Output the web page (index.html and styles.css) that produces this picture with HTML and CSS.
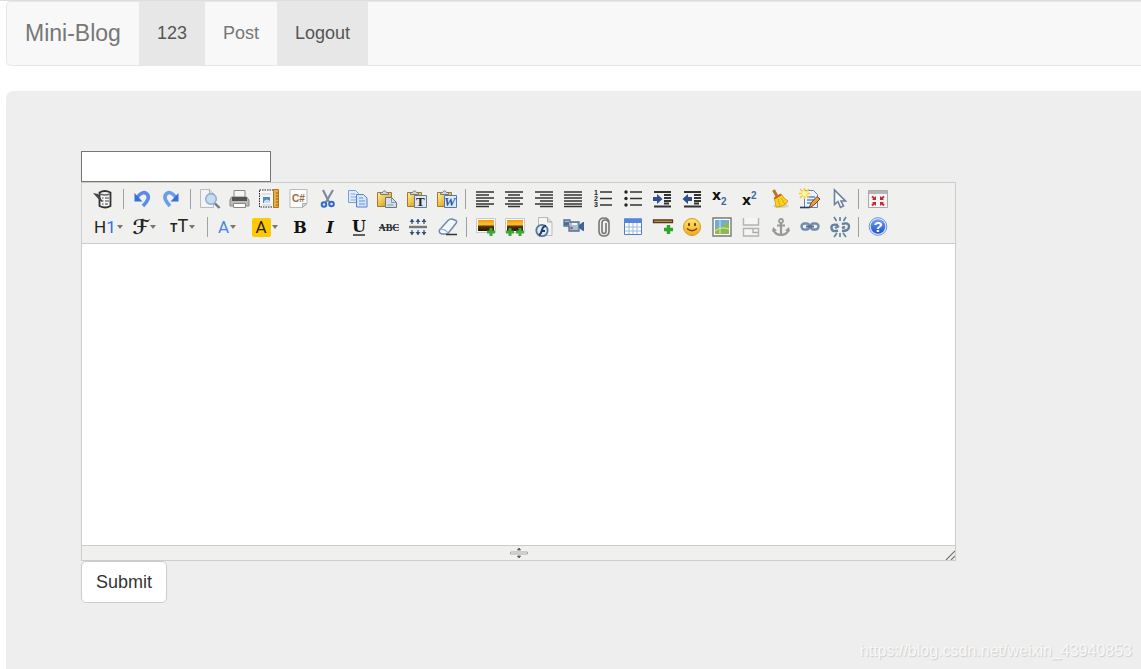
FILE: index.html
```
<!DOCTYPE html>
<html lang="en">
<head>
<meta charset="utf-8">
<title>Mini-Blog</title>
<link rel="stylesheet" href="styles.css">
</head>
<body>
<svg class="defs" aria-hidden="true">
  <defs>
    <linearGradient id="gold" x1="0" y1="0" x2="1" y2="1"><stop offset="0" stop-color="#fff0a0"/><stop offset=".5" stop-color="#edc149"/><stop offset="1" stop-color="#b98418"/></linearGradient>
    <linearGradient id="blue" x1="0" y1="0" x2="0" y2="1"><stop offset="0" stop-color="#6fa2f4"/><stop offset="1" stop-color="#1c50cc"/></linearGradient>
    <linearGradient id="sunset" x1="0" y1="0" x2="0" y2="1"><stop offset="0" stop-color="#f09a10"/><stop offset=".4" stop-color="#ffc42a"/><stop offset=".6" stop-color="#583008"/><stop offset="1" stop-color="#241507"/></linearGradient>
    <linearGradient id="smile" x1="0" y1="0" x2="0" y2="1"><stop offset="0" stop-color="#ffe573"/><stop offset="1" stop-color="#f5a918"/></linearGradient>
    <g id="board"><path d="M.500 3.500h14v14H.500z" fill="url(#gold)" stroke="#a17a2c"/><path d="M3.500 5.500v-2h2q2-3.500 4 0h2v2z" fill="#d6d6d6" stroke="#777"/></g>
    <path id="plus" d="M0-4V4M-4 0H4" fill="none" stroke="#38a838" stroke-width="3"/>
  </defs>
</svg>
<nav class="navbar">
  <a class="brand" href="#">Mini-Blog</a>
  <a class="nav-link active" href="#">123</a>
  <a class="nav-link" href="#">Post</a>
  <a class="nav-link active" href="#">Logout</a>
</nav>
<main class="jumbotron">
  <form class="post-form">
    <input class="title-input" type="text" aria-label="Title">
    <div class="editor">
      <div class="toolbar">
        <div class="tool-row">
          <button type="button" class="tool" aria-label="Source"><svg viewBox="0 0 20 20"><path d="M5.500 3.500q5-3 11 0v13.500q-5 3-11 0z" fill="#f4f4f4" stroke="#333" stroke-width="1.800"/><path d="M6 5q5 2 10 0" fill="none" stroke="#666" stroke-width="1.400"/><path d="M8 9h1.500m1.500 0h4M8 12h1.500m1.500 0h4M8 15h1.500m1.500 0h3" stroke="#444"/><path d="M-1 4l5 1 4.500 7-1 1-4-4z" fill="#444"/></svg></button>
          <span class="sep"></span>
          <button type="button" class="tool" aria-label="Undo"><svg viewBox="0 0 20 20"><path d="M5 8.500Q11 1 15 5T11 17" fill="none" stroke="#5b8ce4" stroke-width="3.600"/><path d="M2.500 4v8.500h8z" fill="#3770dc"/></svg></button>
          <button type="button" class="tool" aria-label="Redo"><svg viewBox="0 0 20 20"><path d="M14 8.500Q8 1 4.200 5T8 17" fill="none" stroke="#6d9de8" stroke-width="3.600"/><path d="M16.500 4v8.500h-8z" fill="#3770dc"/></svg></button>
          <span class="sep"></span>
          <button type="button" class="tool" aria-label="Preview"><svg viewBox="0 0 20 20"><path d="M.500.500h9l4 4v14h-13z" fill="#f2f3f5" stroke="#bbb"/><path d="M9.500.500v4h4" fill="#ddd" stroke="#aaa"/><circle cx="11" cy="10" r="5.300" fill="#c6dcf4" stroke="#8ba9d0" stroke-width="1.400"/><path d="M15 14.500l4.500 4.500" stroke="#777" stroke-width="2.400"/></svg></button>
          <button type="button" class="tool" aria-label="Print"><svg viewBox="0 0 20 20"><path d="M5 8V1.500h11V8" fill="#f6f6f6" stroke="#888"/><path d="M2.500 8h15l2.500 3v6H1v-6z" fill="#bbb" stroke="#888"/><path d="M3 8h15v4H3z" fill="#555"/><path d="M4.500 14.500h12v4h-12z" fill="#fff" stroke="#888"/></svg></button>
          <button type="button" class="tool" aria-label="Template"><svg viewBox="0 0 20 20"><path d="M.500 1h14v17H.500z" fill="#f5f6f8" stroke="#222" stroke-dasharray="1.500 1"/><path d="M4 8h7v6H4z" fill="#4d87c6"/><path d="M3 5h9M3 16h9" stroke="#ccc"/><path d="M5 12q3-3 6 0v2H5z" fill="#c8dced"/><path d="M14.500.500h5v18h-5z" fill="#e9ad42" stroke="#b57514"/><path d="M17 4h2m-2 3h2m-2 3h2m-2 3h2m-2 3h2" stroke="#925c0c"/></svg></button>
          <button type="button" class="tool" aria-label="Code"><svg viewBox="0 0 20 20"><path d="M1 .500h17v14l-4.500 4H1z" fill="#fcfcfc" stroke="#bbb"/><path d="M18 14.500l-4.500 4v-4z" fill="#ddd" stroke="#aaa"/><text x="3" y="13" class="g-code">C#</text></svg></button>
          <button type="button" class="tool" aria-label="Cut"><svg viewBox="0 0 20 20"><path d="M5 1l6 12M15 1L8 13" stroke="#7d8ca4" stroke-width="2.200"/><circle cx="6" cy="15.500" r="2.300" fill="#dfe8f8" stroke="#3569c6" stroke-width="2"/><circle cx="13.500" cy="15" r="2.300" fill="#dfe8f8" stroke="#3569c6" stroke-width="2"/></svg></button>
          <button type="button" class="tool" aria-label="Copy"><svg viewBox="0 0 20 20"><path d="M.500 1.500h7l3 3v9H.500z" fill="#e2edfb" stroke="#7b9dd5"/><path d="M2.500 5h5m-5 3h6m-6 3h6" stroke="#86a9df"/><path d="M8.500 5.500h7l3.500 3.500v9H8.500z" fill="#d6e6fa" stroke="#5682ca"/><path d="M11 9h4m-4 3h6m-6 3h6" stroke="#6792d8"/></svg></button>
          <button type="button" class="tool" aria-label="Paste"><svg viewBox="0 0 20 20"><use href="#board"/><path d="M8.500 8.500h6l5 5v5h-11z" fill="#d6dee8" stroke="#66768c"/><path d="M14.500 8.500v5h5M10.500 16h6" fill="none" stroke="#8797ae"/></svg></button>
          <button type="button" class="tool" aria-label="Paste as plain text"><svg viewBox="0 0 20 20"><use href="#board"/><path d="M7.500 6.500h12v12h-12z" fill="#dfe8f2" stroke="#667b91"/><text x="9" y="17" class="g-paste">T</text></svg></button>
          <button type="button" class="tool" aria-label="Paste from Word"><svg viewBox="0 0 20 20"><use href="#board"/><path d="M7.500 6.500h12v12h-12z" fill="#dceafa" stroke="#5079b7"/><text x="7" y="17" class="g-word">W</text></svg></button>
          <span class="sep"></span>
          <button type="button" class="tool" aria-label="Align left"><svg viewBox="0 0 20 20"><path d="M1 3h18M1 6h13M1 9h18M1 12h13M1 15h18M1 17.500h13" class="lines"/></svg></button>
          <button type="button" class="tool" aria-label="Align center"><svg viewBox="0 0 20 20"><path d="M1 3h18M4 6h12M1 9h18M4 12h12M1 15h18M4 17.500h12" class="lines"/></svg></button>
          <button type="button" class="tool" aria-label="Align right"><svg viewBox="0 0 20 20"><path d="M1 3h18M6 6h13M1 9h18M6 12h13M1 15h18M6 17.500h13" class="lines"/></svg></button>
          <button type="button" class="tool" aria-label="Justify"><svg viewBox="0 0 20 20"><path d="M1 3h18M1 6h18M1 9h18M1 12h18M1 15h18M1 17.500h18" class="lines"/></svg></button>
          <button type="button" class="tool" aria-label="Numbered list"><svg viewBox="0 0 20 20"><path d="M7 3h12M7 9.500h12M7 16h12" class="lines"/><text x="1" y="6" class="g-num">1</text><text x="1" y="12" class="g-num">2</text><text x="1" y="18" class="g-num">3</text></svg></button>
          <button type="button" class="tool" aria-label="Bulleted list"><svg viewBox="0 0 20 20"><path d="M7 3h12M7 9.500h12M7 16h12" class="lines"/><circle cx="3" cy="3" r="1.700" fill="#222"/><circle cx="3" cy="9.500" r="1.700" fill="#222"/><circle cx="3" cy="16" r="1.700" fill="#222"/></svg></button>
          <button type="button" class="tool" aria-label="Indent"><svg viewBox="0 0 20 20"><path d="M2 3h17M12 6h7M12 9h7M12 12h7M12 14.500h5M2 17.500h17" class="lines heavy"/><path d="M1 8h4V5l5.500 5L5 15v-3H1z" fill="#304f91"/></svg></button>
          <button type="button" class="tool" aria-label="Outdent"><svg viewBox="0 0 20 20"><path d="M2 3h17M12 6h7M12 9h7M12 12h7M12 14.500h5M2 17.500h17" class="lines heavy"/><path d="M10 8H6V5L.500 10 6 15v-3h4z" fill="#304f91"/></svg></button>
          <button type="button" class="tool" aria-label="Subscript"><svg viewBox="0 0 20 20"><text x="1" y="11" class="g-x">x</text><text x="10" y="16" class="g-two">2</text></svg></button>
          <button type="button" class="tool" aria-label="Superscript"><svg viewBox="0 0 20 20"><text x="1" y="16" class="g-x">x</text><text x="10" y="10" class="g-two">2</text></svg></button>
          <button type="button" class="tool" aria-label="Clean format"><svg viewBox="0 0 20 20"><ellipse cx="11" cy="17" rx="8" ry="2" fill="#d5d5d0"/><path d="M3.500 1l4.500 8" stroke="#b77825" stroke-width="3"/><path d="M4 9l7-4q3 5 7 7-3 6-12 6 0-4-2-9z" fill="#f8d323" stroke="#dc9b18"/><path d="M4.500 9.500l6.500-4" stroke="#cf5533" stroke-width="2"/><path d="M8 10l2 7m1-8l4 6" stroke="#d8a510"/></svg></button>
          <button type="button" class="tool" aria-label="Quick format"><svg viewBox="0 0 20 20"><path d="M4.500 1.500h9l4 4v13h-13z" fill="#edf4fd" stroke="#6784ad"/><path d="M7 8h8M7 11h7M7 14h5" stroke="#5c89cd" stroke-width="1.500"/><path d="M4.500-1v11M-1 4.500h11M0 0l9 9M9 0L0 9" stroke="#f5c743" stroke-width="1.600"/><circle cx="4.500" cy="4.500" r="2.700" fill="#fff48a"/><path d="M9 19l2-5 6-6.500 3 2.500-6.500 6.500z" fill="#ee9c3e" stroke="#76451c"/><path d="M0 18.500h9" stroke="#263d6b" stroke-width="1.600"/></svg></button>
          <button type="button" class="tool" aria-label="Select all"><svg viewBox="0 0 20 20"><path d="M4.500 1v14.500l3.500-3 2.500 6 3-1.500-2.500-5h4.500z" fill="#f8fbff" stroke="#6b7fa2" stroke-width="1.600"/></svg></button>
          <span class="sep"></span>
          <button type="button" class="tool" aria-label="Fullscreen"><svg viewBox="0 0 20 20"><path d="M.500 1.500h19v17H.500z" fill="#f6f6f6" stroke="#aaa"/><path d="M1 2h18v3H1z" fill="#b5b5b5"/><path d="M4 7.500l3 2.500M16 7.500L13 10M4 16.500l3-3M16 16.500l-3-3" stroke="#c92731" stroke-width="2"/><path d="M8 7v4H4zm4 0v4h4zM8 17v-4H4zm4 0v-4h4z" fill="#c92731"/></svg></button>
        </div>
        <div class="tool-row">
          <button type="button" class="tool drop" aria-label="Heading"><span class="heading-label">H<span class="accent">1</span></span><i class="caret"></i></button>
          <button type="button" class="tool drop mid" aria-label="Font family"><span class="script-label">ℱ</span><i class="caret"></i></button>
          <button type="button" class="tool drop mid" aria-label="Font size"><span class="size-label"><small>T</small>T</span><i class="caret"></i></button>
          <span class="sep"></span>
          <button type="button" class="tool drop narrow" aria-label="Text color"><span class="color-label">A</span><i class="caret"></i></button>
          <button type="button" class="tool drop" aria-label="Highlight color"><span class="highlight-label">A</span><i class="caret"></i></button>
          <button type="button" class="tool" aria-label="Bold"><svg viewBox="0 0 20 20"><text x="10" y="16" class="g-style">B</text></svg></button>
          <button type="button" class="tool" aria-label="Italic"><svg viewBox="0 0 20 20"><text x="10" y="16" class="g-style italic">I</text></svg></button>
          <button type="button" class="tool" aria-label="Underline"><svg viewBox="0 0 20 20"><text x="10" y="15" class="g-style">U</text><path d="M4 18h12" stroke="#222" stroke-width="1.400"/></svg></button>
          <button type="button" class="tool" aria-label="Strikethrough"><svg viewBox="0 0 20 20"><text x="10" y="14" class="g-strike">ABC</text><path d="M0 10.500h20" stroke="#334661"/></svg></button>
          <button type="button" class="tool" aria-label="Line height"><svg viewBox="0 0 20 20"><path d="M1 10h18" stroke="#777" stroke-width="2.400"/><path d="M4 2v5m6-5v5m6-5v5M4 13v5m6-5v5m6-5v5" stroke="#344f7d" stroke-width="1.200"/><path d="M1.500 5L4 2l2.500 3zm6 0L10 2l2.500 3zm6 0L16 2l2.500 3zM1.500 15L4 18l2.500-3zm6 0l2.500 3 2.500-3zm6 0l2.500 3 2.500-3z" fill="#344f7d"/></svg></button>
          <button type="button" class="tool" aria-label="Remove format"><svg viewBox="0 0 20 20"><path d="M1.500 13l8.500-9.500q2-2 4-1.500l4 1.500q1.500 1-.5 3.500l-8 10H4q-3.500-1-2.500-4z" fill="#f3f8ff" stroke="#7189ae" stroke-width="1.500"/><path d="M2 12.500q6-.5 8 4" fill="none" stroke="#9cb2cf" stroke-width="1.300"/><path d="M8 17.500h11" stroke="#333" stroke-width="1.500"/></svg></button>
          <span class="sep"></span>
          <button type="button" class="tool" aria-label="Image"><svg viewBox="0 0 20 20"><path d="M.500 1.500h19v14H.500z" fill="#fff" stroke="#c9c9c9"/><path d="M2 3h16v11H2z" fill="url(#sunset)"/><use href="#plus" x="15" y="15"/></svg></button>
          <button type="button" class="tool" aria-label="Multiple images"><svg viewBox="0 0 20 20"><path d="M.500 1.500h19v14H.500z" fill="#fff" stroke="#c9c9c9"/><path d="M2 3h16v11H2z" fill="url(#sunset)"/><use href="#plus" x="5" y="15"/><use href="#plus" x="15" y="15"/></svg></button>
          <button type="button" class="tool" aria-label="Flash"><svg viewBox="0 0 20 20"><path d="M3.500.500h9l4.500 4.500v13.500H3.500z" fill="#f4f4f4" stroke="#bbb"/><path d="M12.500.500V5H17" fill="#ddd" stroke="#aaa"/><circle cx="7" cy="13.500" r="5.700" fill="#dce9f4" stroke="#52779b" stroke-width="1.800"/><path d="M4 18q2-1 3-5t4-4M6 14h4" fill="none" stroke="#203e67" stroke-width="2"/></svg></button>
          <button type="button" class="tool" aria-label="Media"><svg viewBox="0 0 20 20"><path d="M0 3h6v2h9v9H5V9H0z" fill="#a6bed8" stroke="#526d90" stroke-width="1.300"/><path d="M15 8l4-3h1v9h-1l-4-3z" fill="#41658e"/><path d="M8 6h5v2H8z" fill="#f1f6fa"/><path d="M0 5h5v3H0z" fill="#4f6c91"/><circle cx="7.500" cy="11" r="1.300" fill="#c94456"/></svg></button>
          <button type="button" class="tool" aria-label="Insert file"><svg viewBox="0 0 20 20"><path d="M12 6v8q0 2.500-2 2.500T8 14V6q0-3 3-3t4 3v8q0 5-5 5t-5-5V6q0-5 5-5t5 5" fill="none" stroke="#777" stroke-width="1.600"/></svg></button>
          <button type="button" class="tool" aria-label="Table"><svg viewBox="0 0 20 20"><path d="M1.500 2h17v15.500h-17z" fill="#fff" stroke="#557dc0"/><path d="M1 1.500h18V6H1z" fill="#5686d9"/><path d="M2 10h16M2 14h16M6 6v11M10 6v11M14 6v11" stroke="#9fb7dd"/></svg></button>
          <button type="button" class="tool" aria-label="Horizontal rule"><svg viewBox="0 0 20 20"><path d="M.500 3h19v2.500H.500z" fill="#d8ad73" stroke="#55391d" stroke-width="1.300"/><path d="M15.500 8v9M11 12.500h9" stroke="#2ba62b" stroke-width="3.400"/></svg></button>
          <button type="button" class="tool" aria-label="Emoticons"><svg viewBox="0 0 20 20"><circle cx="10" cy="10" r="8.500" fill="url(#smile)" stroke="#d99a1f"/><ellipse cx="7" cy="7.500" rx="1" ry="1.700" fill="#5c3c14"/><ellipse cx="13" cy="7.500" rx="1" ry="1.700" fill="#5c3c14"/><path d="M5 11.500q5 4.500 10 0" fill="none" stroke="#704510" stroke-width="1.400"/></svg></button>
          <button type="button" class="tool" aria-label="Map"><svg viewBox="0 0 20 20"><path d="M1 1h18v18H1z" fill="#fff" stroke="#777" stroke-width="1.400"/><path d="M3 3h14v14H3z" fill="#68aee5"/><path d="M3 12l4-3 3 2 4-7 3 3v10H3z" fill="#8dba50"/><path d="M3 14q6-5 14-2M8 3v14" stroke="#dce9a5" fill="none"/></svg></button>
          <button type="button" class="tool" aria-label="Page break"><svg viewBox="0 0 20 20"><path d="M2.500 1v7h15V1M2.500 19v-7.500h15V19z" fill="#f5f5f5" stroke="#b3b3b3" stroke-width="1.400"/><path d="M12 12v3.500h5" fill="none" stroke="#aaa" stroke-width="1.300"/></svg></button>
          <button type="button" class="tool" aria-label="Anchor"><svg viewBox="0 0 20 20"><circle cx="10" cy="4" r="2" fill="none" stroke="#999" stroke-width="1.800"/><path d="M10 6v12M6 8.500h8M2.500 13q2 5 7.500 5t7.500-5" fill="none" stroke="#999" stroke-width="2.200"/><path d="M1 14.500l1-4.500 4 3.500zm18 0l-1-4.500-4 3.500z" fill="#999"/></svg></button>
          <button type="button" class="tool" aria-label="Link"><svg viewBox="0 0 20 20"><rect x="1.500" y="6.500" width="8" height="6" rx="3" fill="none" stroke="#738cae" stroke-width="2.400"/><rect x="10.500" y="6.500" width="8" height="6" rx="3" fill="none" stroke="#738cae" stroke-width="2.400"/><path d="M6 9.500h8" stroke="#566f92" stroke-width="2"/></svg></button>
          <button type="button" class="tool" aria-label="Unlink"><svg viewBox="0 0 20 20"><path d="M8 8Q1 6.500 1.500 11T8 13.500M12 7q7-2 7 2.500T12 14M5 11l4-2m3 2l3-1" fill="none" stroke="#657f9f" stroke-width="2.400"/><path d="M10 0v4M4 0l2.500 4M16 0l-2.500 4M10 16v4m-3-4l-3 4m9-4l3 4" stroke="#5c8299" stroke-width="1.600"/></svg></button>
          <span class="sep"></span>
          <button type="button" class="tool" aria-label="About"><svg viewBox="0 0 20 20"><circle cx="10" cy="9.500" r="8.800" fill="#e4edff" stroke="#6b91cf"/><circle cx="10" cy="9.500" r="7.300" fill="url(#blue)"/><text x="10" y="15" class="g-help">?</text></svg></button>
        </div>
      </div>
      <textarea class="content" aria-label="Content"></textarea>
      <div class="statusbar">
        <svg class="grip" viewBox="0 0 20 14"><path d="M10 2l1.500 2h-3zm0 10l1.500-2h-3z" fill="#555" stroke="#666"/><path d="M1.500 6h17v2h-17z" fill="#f5f5f5" stroke="#aaa"/></svg>
        <svg class="resize" viewBox="0 0 10 10"><path d="M1 10l9-9M6 10l4-4" stroke="#777" stroke-width="1.200"/></svg>
      </div>
    </div>
    <button class="submit" type="button">Submit</button>
  </form>
</main>
<div class="watermark">https://blog.csdn.net/weixin_43940853</div>
</body>
</html>
```
FILE: styles.css
```
* { box-sizing: border-box; }
body {
  margin: 0;
  padding-left: 6px;
  min-height: 100vh;
  display: flex;
  flex-direction: column;
  border-top: 1px solid #ddd;
  background: #fff;
  color: #333;
  font-family: "Liberation Sans", Arial, sans-serif;
  font-size: 18px;
  position: relative;
}
.defs { position: absolute; width: 0; height: 0; }
.navbar {
  display: flex;
  margin-bottom: 25px;
  background: #f8f8f8;
  border: 1px solid #e7e7e7;
  border-right: 0;
  border-radius: 5px 0 0 5px;
}
.brand, .nav-link {
  padding: 0 18px;
  line-height: 63px;
  color: #777;
  text-decoration: none;
}
.brand { font-size: 23px; }
.nav-link.active { background: #e7e7e7; color: #555; }
.jumbotron {
  flex: 1;
  padding: 60px 75px;
  background: #eee;
  border-radius: 7px 0 0 0;
}
.post-form { display: flex; flex-direction: column; align-items: flex-start; }
.title-input {
  width: 190px;
  height: 31px;
  padding: 2px 4px;
  border: 1px solid #767676;
  background: #fff;
  font: inherit;
}
.editor {
  width: 100%;
  max-width: 875px;
  border: 1px solid #ccc;
  background: #fff;
}
.toolbar {
  display: flex;
  flex-direction: column;
  gap: 8px;
  padding: 6px 12px;
  background: #f0f0ee;
  border-bottom: 1px solid #ccc;
}
.tool-row {
  display: flex;
  justify-content: space-between;
  align-items: center;
  max-width: 794px;
}
.tool {
  flex: none;
  width: 20px;
  height: 20px;
  padding: 0;
  border: 0;
  background: none;
  color: #222;
}
.tool svg { display: block; width: 20px; height: 20px; overflow: visible; }
.sep { width: 1px; height: 20px; margin: 0 -1px; background: #a0a0a0; }
.drop {
  display: flex;
  align-items: center;
  gap: 1px;
  width: 29px;
  font-family: Roboto, "Liberation Sans", sans-serif;
  font-size: 17px;
  line-height: 20px;
}
.mid { width: 28px; }
.narrow { width: 26px; }
.caret {
  flex: none;
  border: 3px solid transparent;
  border-top: 4px solid #777;
  border-bottom: 0;
}
.accent { color: #2f72e4; }
.script-label { font-family: "DejaVu Sans", sans-serif; font-size: 20px; font-weight: bold; }
.size-label { font-size: 18px; }
.size-label small { font-size: 12px; font-weight: bold; }
.color-label { color: #4384f5; padding-left: 2px; }
.highlight-label {
  width: 19px;
  height: 19px;
  line-height: 19px;
  border-radius: 2px;
  background: #ffc800;
  text-align: center;
}
.lines { fill: none; stroke: #333; stroke-width: 1.500px; }
.heavy { stroke-width: 2px; }
.g-code { font: bold 10px "Liberation Sans", sans-serif; fill: #956b42; }
.g-paste { font: bold 13px "Liberation Serif", serif; fill: #222; }
.g-word { font: italic bold 13px "Liberation Serif", serif; fill: #2858a8; }
.g-num { font: bold 7px "Liberation Sans", sans-serif; fill: #222; }
.g-x { font: bold 14px "DejaVu Sans", sans-serif; fill: #111; }
.g-two { font: bold 10px "Liberation Sans", sans-serif; fill: #4666a4; }
.g-style { font: bold 16px "DejaVu Serif", serif; fill: #111; text-anchor: middle; }
.italic { font-style: italic; }
.g-strike { font: bold 10px "Liberation Serif", serif; fill: #222; text-anchor: middle; }
.g-help { font: bold 15px "Liberation Sans", sans-serif; fill: #fff; text-anchor: middle; }
.content {
  display: block;
  width: 100%;
  height: 301px;
  padding: 6px;
  border: 0;
  resize: none;
  background: #fff;
  font: inherit;
}
.statusbar {
  display: grid;
  grid-template-columns: 1fr 20px 1fr;
  align-items: end;
  height: 15px;
  border-top: 1px solid #ccc;
  background: #f0f0ee;
}
.grip { grid-column: 2; width: 20px; height: 14px; }
.resize { justify-self: end; width: 10px; height: 10px; }
.submit {
  padding: 0 14px;
  border: 1px solid #ccc;
  border-radius: 5px;
  background: #fff;
  color: #333;
  font: inherit;
  line-height: 40px;
}
.watermark {
  position: absolute;
  right: 9px;
  bottom: 9px;
  color: #f8f8f8;
  font-size: 16px;
  line-height: 18px;
  text-shadow: 1px 1px 1px #ccc;
}
```
